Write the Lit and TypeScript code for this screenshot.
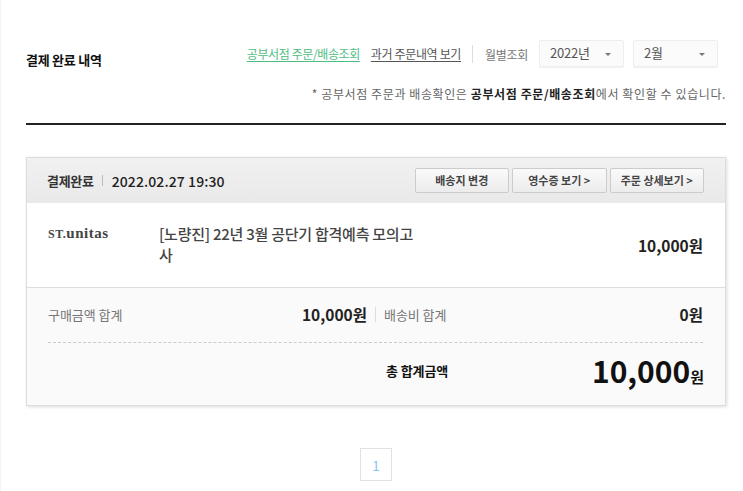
import { LitElement, html, css } from "lit";
import { customElement } from "lit/decorators.js";

@customElement("app-root")
export class AppRoot extends LitElement {
  static styles = css`
    :host { display: block; width: 743px; height: 491px; overflow: hidden; background: #fff; font-family: "Noto Sans CJK KR", "Noto Sans", sans-serif; font-size: 12px; color: #666; box-sizing: border-box; border-left: 1px solid #f4f4f4; }
    * { box-sizing: border-box; }
    .wrap { margin-left: 25px; width: 700px; padding-top: 41px; }
    .top { display: flex; align-items: flex-start; height: 26px; }
    .title { font-size: 13px; font-weight: 700; color: #111; line-height: 19px; margin-top: 9px; letter-spacing: -0.25px; }
    .links { margin-left: auto; display: flex; align-items: center; height: 26px; margin-right: 8px; }
    .lnk { font-size: 12px; letter-spacing: -0.35px; text-decoration: underline; text-underline-offset: 2px; color: #555; line-height: 18px; }
    .lnk.green { color: #4dbd82; margin-right: 11px; letter-spacing: -0.4px; }
    .bar { width: 1px; height: 18px; background: #ddd; margin: 0 12px 0 11px; }
    .mlabel { font-size: 12px; letter-spacing: -0.3px; color: #777; margin-right: 11px; }
    .sel { height: 27px; margin-top: -1px; border: 1px solid #eee; border-radius: 2px; background: #fbfbfb; box-shadow: 0 1px 1px rgba(0,0,0,.06); font-size: 13px; color: #555; line-height: 24px; padding-left: 10px; position: relative; letter-spacing: -0.2px; }
    .sel.y { width: 85px; margin-right: 9px; }
    .sel.m { width: 85px; }
    .sel::after { content: ""; position: absolute; right: 12px; top: 12px; border: 3px solid transparent; border-top: 3px solid #777; border-bottom: 0; }
    .note { text-align: right; font-size: 12px; color: #666; line-height: 18px; margin-top: 18px; letter-spacing: 0.6px; }
    .note b { color: #222; font-weight: 700; }
    .rule { height: 2px; background: #222; margin-top: 20px; }
    .card { margin-top: 32px; height: 249px; border: 1px solid #ddd; box-shadow: 1px 1px 3px rgba(0,0,0,.14); background: #fff; }
    .head { height: 45px; background: linear-gradient(#f1f1f1, #e9e9e9); display: flex; align-items: center; padding: 0 21px 0 20px; }
    .st { font-size: 13px; font-weight: 700; color: #333; letter-spacing: -0.3px; }
    .sep { width: 1px; height: 11px; background: #bbb; margin: 0 9px 0 8px; }
    .dt { font-size: 14px; font-weight: 500; color: #222; letter-spacing: 0.1px; }
    .btns { margin-left: auto; display: flex; gap: 3px; margin-top: -1px; }
    .btn { height: 25px; width: 94.5px; border: 1px solid #ccc; border-radius: 2px; background: linear-gradient(#fafafa, #ececec); font-size: 11px; font-weight: 700; color: #444; display: flex; align-items: center; justify-content: center; letter-spacing: 0; }
    .body { height: 85px; display: flex; border-bottom: 1px solid #ddd; padding: 0 22px 0 21px; }
    .brand { width: 111px; font-family: "Liberation Serif", serif; font-weight: 700; font-size: 15px; color: #444; padding-top: 21px; line-height: 18px; letter-spacing: 0.5px; }
    .brand small { font-size: 12px; }
    .name { width: 262px; font-size: 15px; font-weight: 500; line-height: 21px; color: #444; padding-top: 20px; letter-spacing: -0.25px; }
    .price { margin-left: auto; align-self: center; font-size: 15.5px; font-weight: 700; color: #222; }
    .sum { height: 117px; background: #fafafa; padding: 0 22px 0 21px; }
    .row1 { height: 55px; padding-bottom: 2px; display: flex; align-items: center; border-bottom: 1px dashed #ccc; }
    .lb { font-size: 13px; color: #777; letter-spacing: -0.05px; }
    .v { font-size: 15.5px; font-weight: 700; color: #222; }
    .first { width: 319px; display: flex; justify-content: space-between; align-items: center; }
    .vbar { width: 1px; height: 15px; background: #ddd; margin: 0 8px 0 8px; }
    .row1 .end, .row2 .end { margin-left: auto; }
    .row2 { display: flex; align-items: center; height: 56px; padding-left: 338px; }
    .tl { font-size: 13px; font-weight: 700; color: #111; letter-spacing: -0.1px; margin-top: -2px; }
    .big { font-size: 30px; font-weight: 700; color: #111; line-height: 36px; margin-top: 4px; margin-right: -1px; }
    .big span { font-size: 15px; }
    .pager { display: flex; justify-content: center; margin-top: 42px; }
    .page { width: 32px; height: 33px; border: 1px solid #e2e2e2; color: #86c8f5; font-size: 14px; display: flex; align-items: center; justify-content: center; }
  `;

  render() {
    return html`
      <div class="wrap">
        <div class="top">
          <div class="title">결제 완료 내역</div>
          <div class="links">
            <span class="lnk green">공부서점 주문/배송조회</span>
            <span class="lnk">과거 주문내역 보기</span>
            <span class="bar"></span>
            <span class="mlabel">월별조회</span>
            <div class="sel y">2022년</div>
            <div class="sel m">2월</div>
          </div>
        </div>
        <div class="note">* 공부서점 주문과 배송확인은 <b>공부서점 주문/배송조회</b>에서 확인할 수 있습니다.</div>
        <div class="rule"></div>
        <div class="card">
          <div class="head">
            <span class="st">결제완료</span><span class="sep"></span><span class="dt">2022.02.27 19:30</span>
            <div class="btns">
              <div class="btn">배송지 변경</div>
              <div class="btn">영수증 보기 &gt;</div>
              <div class="btn">주문 상세보기 &gt;</div>
            </div>
          </div>
          <div class="body">
            <div class="brand"><small>ST.</small>unitas</div>
            <div class="name">[노량진] 22년 3월 공단기 합격예측 모의고사</div>
            <div class="price">10,000원</div>
          </div>
          <div class="sum">
            <div class="row1">
              <div class="first"><span class="lb">구매금액 합계</span><span class="v">10,000원</span></div>
              <span class="vbar"></span>
              <span class="lb">배송비 합계</span>
              <span class="v end">0원</span>
            </div>
            <div class="row2">
              <span class="tl">총 합계금액</span>
              <span class="big end">10,000<span>원</span></span>
            </div>
          </div>
        </div>
        <div class="pager"><div class="page">1</div></div>
      </div>
    `;
  }
}
